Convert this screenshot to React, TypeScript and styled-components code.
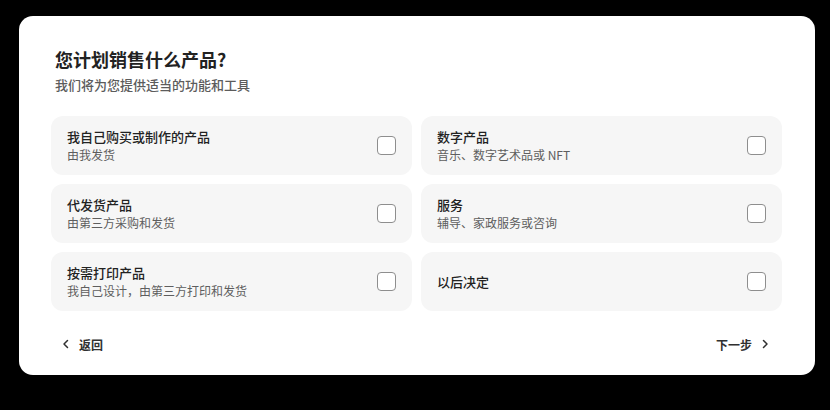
import React, { useState } from 'react';
import styled, { createGlobalStyle } from 'styled-components';

const GlobalStyle = createGlobalStyle`
  html, body {
    margin: 0;
    padding: 0;
    background: #000;
    font-family: "Noto Sans CJK SC", "Noto Sans", sans-serif;
  }
`;

const Page = styled.div`
  width: 830px;
  height: 410px;
  padding: 16px 15px 0 19px;
  box-sizing: border-box;
  background: #000;
`;

const Dialog = styled.div`
  width: 796px;
  height: 359px;
  box-sizing: border-box;
  background: #fff;
  border-radius: 14px;
  padding: 31px 33px 0 32px;
  display: flex;
  flex-direction: column;
`;

const Header = styled.div`
  padding: 0 4px;
`;

const Title = styled.h2`
  margin: 0;
  font-size: 18px;
  line-height: 24px;
  font-weight: 700;
  color: #222;
`;

const Subtitle = styled.p`
  margin: 5px 0 0;
  font-size: 13px;
  line-height: 18px;
  font-weight: 500;
  color: #5c5c5c;
`;

const Grid = styled.div`
  margin-top: 22px;
  display: grid;
  grid-template-columns: 1fr 1fr;
  grid-auto-rows: 59px;
  gap: 9px;
`;

const Option = styled.label`
  display: flex;
  align-items: center;
  justify-content: space-between;
  padding: 0 16px;
  background: #f6f6f6;
  border-radius: 12px;
  cursor: pointer;
`;

const OptionText = styled.div`
  display: flex;
  flex-direction: column;
`;

const OptionTitle = styled.span`
  font-size: 13px;
  line-height: 18px;
  font-weight: 500;
  color: #222;
`;

const OptionDesc = styled.span`
  font-size: 12px;
  line-height: 17px;
  font-weight: 400;
  color: #5e5e5e;
`;

const Box = styled.span<{ $checked: boolean }>`
  width: 17px;
  height: 17px;
  border: 1px solid #8e8e8e;
  border-radius: 4px;
  background: ${p => (p.$checked ? '#303030' : '#fff')};
`;

const Footer = styled.div`
  margin-top: 17px;
  display: flex;
  justify-content: space-between;
  align-items: center;
  height: 32px;
`;

const NavButton = styled.button<{ $side: 'left' | 'right' }>`
  display: flex;
  align-items: center;
  gap: 8px;
  border: none;
  background: none;
  padding: ${p => (p.$side === 'left' ? '0 0 0 10px' : '0 12px 0 0')};
  font-family: inherit;
  font-size: 12px;
  font-weight: 700;
  color: #303030;
  cursor: pointer;
`;

const Chevron = ({ dir }: { dir: 'left' | 'right' }) => (
  <svg width="10" height="10" viewBox="0 0 10 10" fill="none">
    <path
      d={dir === 'left' ? 'M6.5 1.5 3 5l3.5 3.5' : 'M3.5 1.5 7 5 3.5 8.5'}
      stroke="#303030"
      strokeWidth="1.5"
      strokeLinecap="round"
      strokeLinejoin="round"
    />
  </svg>
);

interface Item {
  title: string;
  desc?: string;
}

const items: Item[] = [
  { title: '我自己购买或制作的产品', desc: '由我发货' },
  { title: '数字产品', desc: '音乐、数字艺术品或 NFT' },
  { title: '代发货产品', desc: '由第三方采购和发货' },
  { title: '服务', desc: '辅导、家政服务或咨询' },
  { title: '按需打印产品', desc: '我自己设计，由第三方打印和发货' },
  { title: '以后决定' },
];

const App: React.FC = () => {
  const [checked, setChecked] = useState<boolean[]>(items.map(() => false));

  const toggle = (i: number) =>
    setChecked(prev => prev.map((v, j) => (j === i ? !v : v)));

  return (
    <Page>
      <GlobalStyle />
      <Dialog>
        <Header>
          <Title>您计划销售什么产品?</Title>
          <Subtitle>我们将为您提供适当的功能和工具</Subtitle>
        </Header>

        <Grid>
          {items.map((item, i) => (
            <Option key={i} onClick={() => toggle(i)}>
              <OptionText>
                <OptionTitle>{item.title}</OptionTitle>
                {item.desc && <OptionDesc>{item.desc}</OptionDesc>}
              </OptionText>
              <Box $checked={checked[i]} />
            </Option>
          ))}
        </Grid>

        <Footer>
          <NavButton $side="left">
            <Chevron dir="left" />
            返回
          </NavButton>
          <NavButton $side="right">
            下一步
            <Chevron dir="right" />
          </NavButton>
        </Footer>
      </Dialog>
    </Page>
  );
};

export default App;
